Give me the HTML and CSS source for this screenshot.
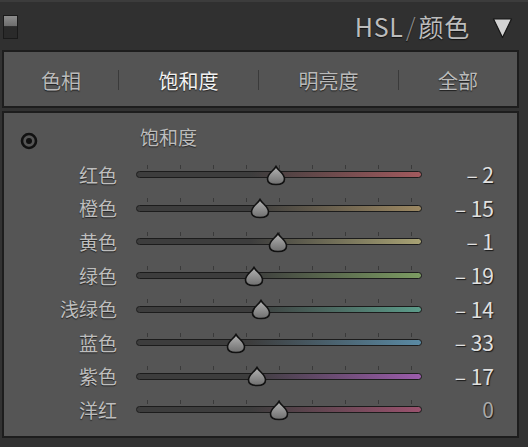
FILE: index.html
```html
<!DOCTYPE html>
<html lang="zh">
<head>
<meta charset="utf-8">
<link rel="stylesheet" href="styles.css">
</head>
<body>
<svg width="0" height="0" class="defs">
  <defs>
    <linearGradient id="tg" x1="0" y1="0" x2="0" y2="1">
      <stop offset="0" stop-color="#b4b4b4"/>
      <stop offset="1" stop-color="#6e6e6e"/>
    </linearGradient>
  </defs>
</svg>
<div class="header">
  <div class="toggle"></div>
  <div class="title">HSL<span class="slash">/</span>颜色</div>
  <svg class="tri" width="21" height="22" viewBox="0 0 21 22"><path d="M1.5 2 L19.5 2 L10.5 20.5 Z" fill="#d2d2d2" stroke="#151515" stroke-width="1.2" stroke-linejoin="round"/></svg>
</div>
<div class="tabs">
  <div class="tab first">色相</div>
  <div class="sep"></div>
  <div class="tab mid active">饱和度</div>
  <div class="sep"></div>
  <div class="tab mid">明亮度</div>
  <div class="sep"></div>
  <div class="tab last">全部</div>
</div>
<div class="panel">
  <div class="head">
    <svg class="target" width="20" height="20" viewBox="0 0 20 20"><circle cx="10" cy="10" r="7" fill="none" stroke="#111" stroke-width="2.6"/><circle cx="10" cy="10" r="3" fill="#111"/></svg>
    <div class="heading">饱和度</div>
  </div>
  <div class="rows">
    <div class="row"><div class="label">红色</div><div class="slider"><div class="ticks"><i></i><i></i><i></i><i></i><i></i><i></i><i></i><i></i><i></i></div><div class="track red"></div><svg class="thumb" style="left:140.4px" width="20" height="21" viewBox="0 0 20 21"><path d="M10 1.5 C12.5 6 18.5 8.5 18.5 14 C18.5 18 14.5 19.5 10 19.5 C5.5 19.5 1.5 18 1.5 14 C1.5 8.5 7.5 6 10 1.5 Z" fill="url(#tg)" stroke="#111" stroke-width="1.6"/></svg></div><div class="value">–&nbsp;2</div></div>
    <div class="row"><div class="label">橙色</div><div class="slider"><div class="ticks"><i></i><i></i><i></i><i></i><i></i><i></i><i></i><i></i><i></i></div><div class="track orange"></div><svg class="thumb" style="left:123.5px" width="20" height="21" viewBox="0 0 20 21"><path d="M10 1.5 C12.5 6 18.5 8.5 18.5 14 C18.5 18 14.5 19.5 10 19.5 C5.5 19.5 1.5 18 1.5 14 C1.5 8.5 7.5 6 10 1.5 Z" fill="url(#tg)" stroke="#111" stroke-width="1.6"/></svg></div><div class="value">–&nbsp;15</div></div>
    <div class="row"><div class="label">黄色</div><div class="slider"><div class="ticks"><i></i><i></i><i></i><i></i><i></i><i></i><i></i><i></i><i></i></div><div class="track yellow"></div><svg class="thumb" style="left:141.7px" width="20" height="21" viewBox="0 0 20 21"><path d="M10 1.5 C12.5 6 18.5 8.5 18.5 14 C18.5 18 14.5 19.5 10 19.5 C5.5 19.5 1.5 18 1.5 14 C1.5 8.5 7.5 6 10 1.5 Z" fill="url(#tg)" stroke="#111" stroke-width="1.6"/></svg></div><div class="value">–&nbsp;1</div></div>
    <div class="row"><div class="label">绿色</div><div class="slider"><div class="ticks"><i></i><i></i><i></i><i></i><i></i><i></i><i></i><i></i><i></i></div><div class="track green"></div><svg class="thumb" style="left:118.3px" width="20" height="21" viewBox="0 0 20 21"><path d="M10 1.5 C12.5 6 18.5 8.5 18.5 14 C18.5 18 14.5 19.5 10 19.5 C5.5 19.5 1.5 18 1.5 14 C1.5 8.5 7.5 6 10 1.5 Z" fill="url(#tg)" stroke="#111" stroke-width="1.6"/></svg></div><div class="value">–&nbsp;19</div></div>
    <div class="row"><div class="label">浅绿色</div><div class="slider"><div class="ticks"><i></i><i></i><i></i><i></i><i></i><i></i><i></i><i></i><i></i></div><div class="track aqua"></div><svg class="thumb" style="left:124.8px" width="20" height="21" viewBox="0 0 20 21"><path d="M10 1.5 C12.5 6 18.5 8.5 18.5 14 C18.5 18 14.5 19.5 10 19.5 C5.5 19.5 1.5 18 1.5 14 C1.5 8.5 7.5 6 10 1.5 Z" fill="url(#tg)" stroke="#111" stroke-width="1.6"/></svg></div><div class="value">–&nbsp;14</div></div>
    <div class="row"><div class="label">蓝色</div><div class="slider"><div class="ticks"><i></i><i></i><i></i><i></i><i></i><i></i><i></i><i></i><i></i></div><div class="track blue"></div><svg class="thumb" style="left:100.1px" width="20" height="21" viewBox="0 0 20 21"><path d="M10 1.5 C12.5 6 18.5 8.5 18.5 14 C18.5 18 14.5 19.5 10 19.5 C5.5 19.5 1.5 18 1.5 14 C1.5 8.5 7.5 6 10 1.5 Z" fill="url(#tg)" stroke="#111" stroke-width="1.6"/></svg></div><div class="value">–&nbsp;33</div></div>
    <div class="row"><div class="label">紫色</div><div class="slider"><div class="ticks"><i></i><i></i><i></i><i></i><i></i><i></i><i></i><i></i><i></i></div><div class="track purple"></div><svg class="thumb" style="left:120.9px" width="20" height="21" viewBox="0 0 20 21"><path d="M10 1.5 C12.5 6 18.5 8.5 18.5 14 C18.5 18 14.5 19.5 10 19.5 C5.5 19.5 1.5 18 1.5 14 C1.5 8.5 7.5 6 10 1.5 Z" fill="url(#tg)" stroke="#111" stroke-width="1.6"/></svg></div><div class="value">–&nbsp;17</div></div>
    <div class="row"><div class="label">洋红</div><div class="slider"><div class="ticks"><i></i><i></i><i></i><i></i><i></i><i></i><i></i><i></i><i></i></div><div class="track magenta"></div><svg class="thumb" style="left:143px" width="20" height="21" viewBox="0 0 20 21"><path d="M10 1.5 C12.5 6 18.5 8.5 18.5 14 C18.5 18 14.5 19.5 10 19.5 C5.5 19.5 1.5 18 1.5 14 C1.5 8.5 7.5 6 10 1.5 Z" fill="url(#tg)" stroke="#111" stroke-width="1.6"/></svg></div><div class="value zero">0</div></div>
  </div>
</div>
</body>
</html>
```

FILE: styles.css
```css
html, body {
  margin: 0;
  padding: 0;
}
body {
  width: 528px;
  height: 447px;
  overflow: hidden;
  background: #323232;
  font-family: "Noto Sans CJK SC", "Noto Sans", sans-serif;
  color: #bdbdbd;
}
.defs {
  position: absolute;
}
.header {
  height: 50px;
  display: flex;
  align-items: center;
  background: #303030;
  border-top: 2px solid #3c3c3c;
  box-sizing: border-box;
}
.toggle {
  width: 13px;
  height: 22px;
  margin-left: 3px;
  margin-top: 2px;
  border: 1px solid #1a1a1a;
  background: linear-gradient(to bottom, #8c8c8c 0%, #6e6e6e 45%, #2a2a2a 48%, #2a2a2a 100%);
}
.title {
  margin-left: auto;
  font-size: 25px;
  letter-spacing: 0.8px;
  color: #bcbcbc;
  line-height: 1;
  text-shadow: 0 1px 1px #111;
}
.slash {
  color: #8a8a8a;
  font-weight: 300;
  margin: 0 2px;
}
.tri {
  margin-left: 22px;
  margin-right: 15px;
  margin-top: 4px;
}
.tabs {
  height: 58px;
  box-sizing: border-box;
  margin: 0 9px 0 2px;
  border: 2px solid #1d1d1d;
  background: #545454;
  display: flex;
  align-items: center;
}
.tab {
  text-align: center;
  font-size: 20px;
  color: #bababa;
  text-shadow: 0 1px 1px #1e1e1e;
  padding-top: 2px;
}
.tab.first {
  width: 114px;
}
.tab.mid {
  width: 139px;
}
.tab.last {
  flex: 1;
}
.tab.active {
  color: #f2f2f2;
}
.sep {
  width: 1px;
  height: 20px;
  background: #3a3a3a;
  margin-top: 2px;
}
.panel {
  margin: 3px 9px 0 2px;
  height: 327px;
  box-sizing: border-box;
  border: 2px solid #1d1d1d;
  background: #555555;
}
.head {
  display: flex;
  align-items: center;
  height: 45px;
}
.target {
  margin-left: 15px;
  margin-top: 11px;
}
.heading {
  margin-left: 101px;
  font-size: 19px;
  color: #bdbdbd;
  text-shadow: 0 1px 1px #222;
  margin-top: 2px;
}
.rows {
  display: flex;
  flex-direction: column;
}
.row {
  height: 33.6px;
  display: grid;
  grid-template-columns: 113px 286px 53px;
  column-gap: 19px;
  align-items: center;
}
.label {
  text-align: right;
  font-size: 19px;
  color: #bebebe;
  text-shadow: 0 1px 1px #222;
  margin-top: -1px;
}
.slider {
  position: relative;
  height: 24px;
}
.ticks {
  display: flex;
  justify-content: space-between;
  padding: 0 10px 0 11px;
  height: 4px;
  margin-top: 2px;
}
.ticks i {
  width: 1px;
  height: 4px;
  background: #3a3a3a;
}
.track {
  height: 7px;
  box-sizing: border-box;
  border: 1.5px solid #1c1c1c;
  border-radius: 4px;
  margin-top: 2.5px;
  background: #3d3d3d;
}
.track.red { background: linear-gradient(to right, #3d3d3d 40%, #a25a5e); }
.track.orange { background: linear-gradient(to right, #3d3d3d 40%, #9c8862); }
.track.yellow { background: linear-gradient(to right, #3d3d3d 40%, #a8a274); }
.track.green { background: linear-gradient(to right, #3d3d3d 40%, #7c9c62); }
.track.aqua { background: linear-gradient(to right, #3d3d3d 40%, #5c9c8a); }
.track.blue { background: linear-gradient(to right, #3d3d3d 40%, #5a8aa4); }
.track.purple { background: linear-gradient(to right, #3d3d3d 40%, #9c5cac); }
.track.magenta { background: linear-gradient(to right, #3d3d3d 40%, #9a526e); }
.thumb {
  position: absolute;
  top: 2px;
  margin-left: -10px;
}
.value {
  text-align: right;
  font-size: 21px;
  color: #e0e0e0;
  text-shadow: 1px 1px 1px #1a1a1a;
  margin-top: -1px;
  white-space: nowrap;
}
.value.zero {
  color: #a8a8a8;
}
```
